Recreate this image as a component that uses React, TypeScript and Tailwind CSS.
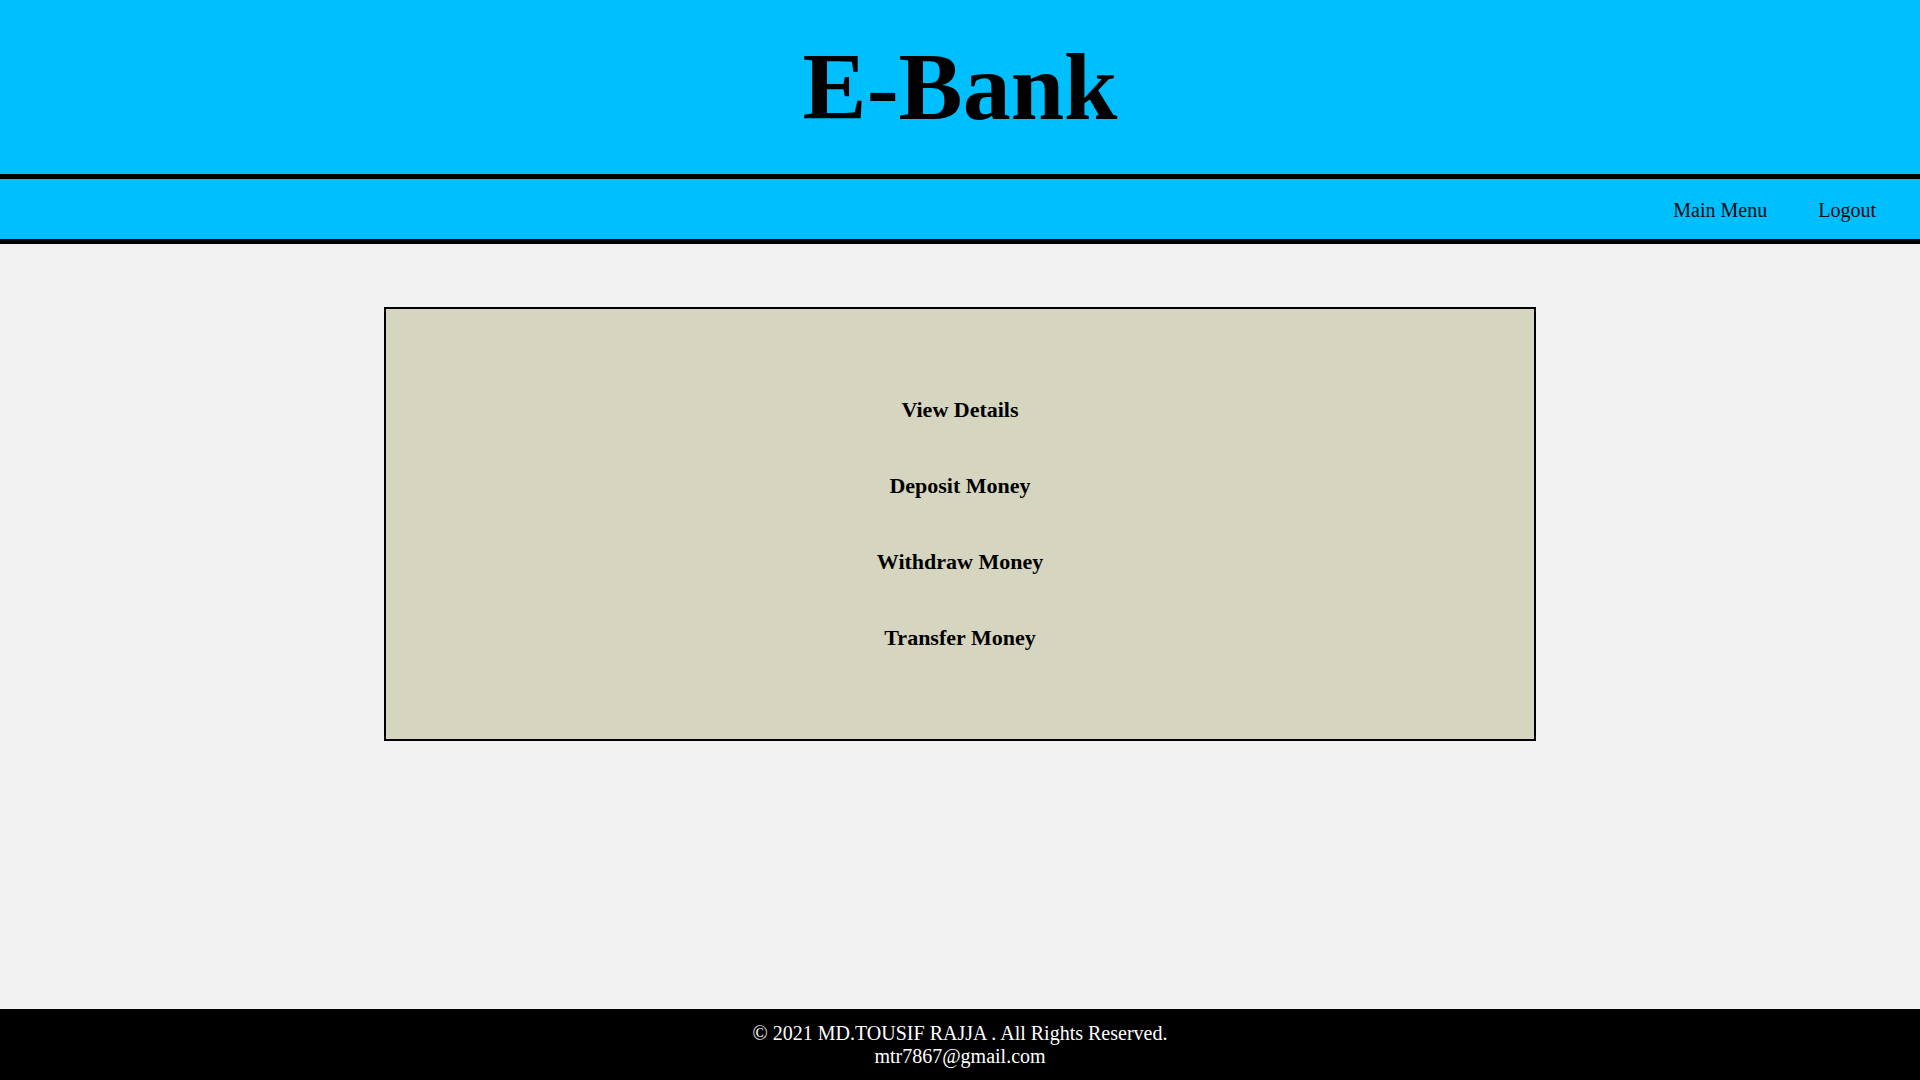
const menuItems = ["View Details", "Deposit Money", "Withdraw Money", "Transfer Money"];

const App = () => {
  return (
    <div className="flex min-h-screen flex-col bg-[#f2f2f2] font-['Liberation_Serif',serif] text-black">
      <header className="flex h-[179px] items-center justify-center border-b-[5px] border-black bg-[#00bfff]">
        <h1 className="text-[96px] font-bold leading-[1.15]">E-Bank</h1>
      </header>
      <nav className="flex h-[65px] items-center justify-end gap-[51px] border-b-[5px] border-black bg-[#00bfff] pr-[44px] pt-[2px]">
        <a href="#" className="text-[20px] leading-[23px] text-[#0a0a0a]">
          Main Menu
        </a>
        <a href="#" className="text-[20px] leading-[23px] text-[#0a0a0a]">
          Logout
        </a>
      </nav>
      <main className="flex flex-1 justify-center pt-[63px]">
        <div className="flex h-[434px] w-[1152px] flex-col items-center gap-[51px] border-2 border-black bg-[#d6d5c0] pt-[88px]">
          {menuItems.map((item) => (
            <a key={item} href="#" className="text-[22px] font-bold leading-[25px]">
              {item}
            </a>
          ))}
        </div>
      </main>
      <footer className="flex h-[71px] flex-col items-center bg-black pt-[13px] text-[20px] leading-[23px] text-white">
        <p>© 2021 MD.TOUSIF RAJJA . All Rights Reserved.</p>
        <p>mtr7867@gmail.com</p>
      </footer>
    </div>
  );
};

export default App;
